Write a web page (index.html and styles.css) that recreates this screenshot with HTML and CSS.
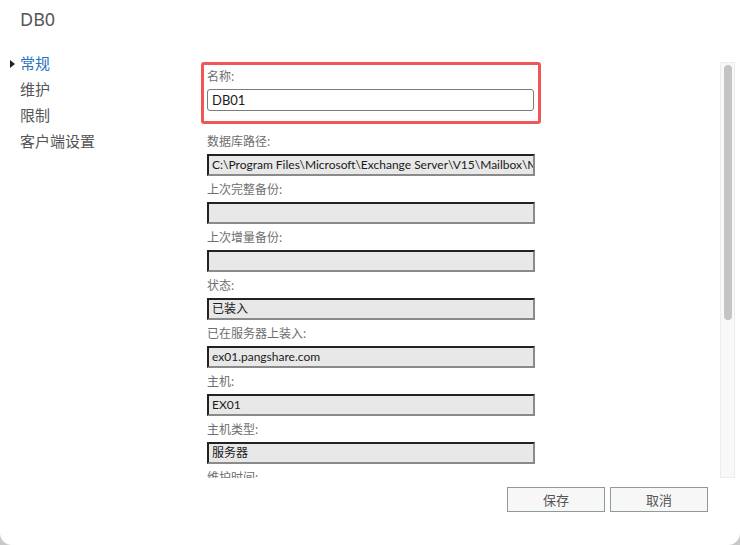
FILE: index.html
```html
<!DOCTYPE html>
<html lang="zh-CN">
<head>
    <meta charset="UTF-8">
    <title>DB0</title>
    <link rel="stylesheet" href="styles.css">
</head>
<body>
    <div class="dialog">
        <h1 class="title">DB0</h1>

        <div class="main">
            <ul class="nav">
                <li class="active">常规</li>
                <li>维护</li>
                <li>限制</li>
                <li>客户端设置</li>
            </ul>

            <div class="form-area">
                <div class="form-scroll">
                    <div class="highlight">
                        <div class="label">名称:</div>
                        <div class="input">DB01</div>
                    </div>

                    <div class="group">
                        <div class="label">数据库路径:</div>
                        <div class="field">C:\Program Files\Microsoft\Exchange Server\V15\Mailbox\Mailbox Database</div>
                    </div>
                    <div class="group">
                        <div class="label">上次完整备份:</div>
                        <div class="field"></div>
                    </div>
                    <div class="group">
                        <div class="label">上次增量备份:</div>
                        <div class="field"></div>
                    </div>
                    <div class="group">
                        <div class="label">状态:</div>
                        <div class="field">已装入</div>
                    </div>
                    <div class="group">
                        <div class="label">已在服务器上装入:</div>
                        <div class="field">ex01.pangshare.com</div>
                    </div>
                    <div class="group">
                        <div class="label">主机:</div>
                        <div class="field">EX01</div>
                    </div>
                    <div class="group">
                        <div class="label">主机类型:</div>
                        <div class="field">服务器</div>
                    </div>
                    <div class="group">
                        <div class="label">维护时间:</div>
                        <div class="field"></div>
                    </div>
                </div>
            </div>

            <div class="scrollbar">
                <div class="thumb"></div>
            </div>
        </div>

        <div class="actions">
            <button class="btn">保存</button>
            <button class="btn">取消</button>
        </div>
    </div>
</body>
</html>
```

FILE: styles.css
```css
:root {
    --text-dark: #1a1a1a;
    --text-gray: #6e6e6e;
    --nav-gray: #555555;
    --nav-blue: #2672c0;
    --red: #f05656;
    --field-bg: #e8e8e8;
}

* {
    margin: 0;
    padding: 0;
    box-sizing: border-box;
}

body {
    background-color: #c8c8c8;
    font-family: 'Noto Sans', 'Noto Sans CJK SC', sans-serif;
}

.dialog {
    width: 740px;
    height: 545px;
    background-color: #ffffff;
    border-radius: 0 0 12px 12px;
    display: flex;
    flex-direction: column;
}

.title {
    font-size: 18px;
    font-weight: 400;
    color: #555555;
    padding: 6px 0 0 20px;
    height: 50px;
    line-height: 26px;
}

.main {
    display: flex;
    height: 429px;
}

/* navigation de gauche */
.nav {
    list-style: none;
    width: 201px;
    padding-left: 20px;
}

.nav li {
    font-size: 15px;
    line-height: 26px;
    color: var(--nav-gray);
    position: relative;
}

.nav li.active {
    color: var(--nav-blue);
}

.nav li.active::before {
    content: '';
    position: absolute;
    left: -10px;
    top: 10px;
    border-left: 5px solid #222;
    border-top: 4px solid transparent;
    border-bottom: 4px solid transparent;
}

/* zone du formulaire */
.form-area {
    width: 340px;
    height: 428px;
    padding-top: 12px;
    overflow: hidden;
}

.highlight {
    border: 3px solid var(--red);
    border-radius: 3px;
    padding: 2px 4px 10px 3px;
    margin-bottom: 8px;
}

.group {
    padding: 0 6px 0 6px;
}

.label {
    font-size: 12px;
    line-height: 20px;
    color: var(--text-gray);
    margin-bottom: 2px;
}

.input {
    height: 22px;
    border: 1px solid #7a7a7a;
    border-radius: 3px;
    font-family: 'Lato', 'Noto Sans CJK SC', sans-serif;
    font-size: 13px;
    line-height: 20px;
    padding-left: 4px;
    color: var(--text-dark);
}

.field {
    height: 22px;
    border: 2px solid;
    border-color: #222222 #8a8a8a #8a8a8a #222222;
    background-color: var(--field-bg);
    font-family: 'Lato', 'Noto Sans CJK SC', sans-serif;
    font-size: 12px;
    line-height: 18px;
    padding-left: 3px;
    color: var(--text-dark);
    white-space: nowrap;
    overflow: hidden;
    margin-bottom: 4px;
}

/* barre de défilement */
.scrollbar {
    width: 15px;
    height: 416px;
    margin: 12px 0 0 179px;
    background-color: #f8f8f8;
    border: 1px solid #ececec;
    padding: 2px 3px;
}

.thumb {
    width: 8px;
    height: 255px;
    background-color: #c4c4c4;
    border-radius: 4px;
}

/* boutons */
.actions {
    display: flex;
    justify-content: flex-end;
    gap: 5px;
    padding: 8px 32px 0 0;
}

.btn {
    width: 98px;
    height: 25px;
    background-color: #f7f7f7;
    border: 1px solid #8f9a9a;
    font-family: 'Noto Sans', 'Noto Sans CJK SC', sans-serif;
    font-size: 13px;
    color: #555555;
}
```
